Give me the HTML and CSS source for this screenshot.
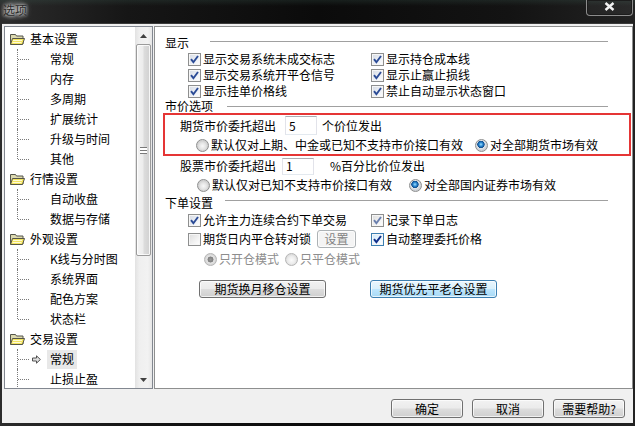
FILE: index.html
```html
<!DOCTYPE html>
<html lang="zh-CN">
<head>
    <meta charset="UTF-8">
    <title>选项</title>
    <link rel="stylesheet" href="styles.css">
</head>
<body>
<div class="window">
    <div class="window__title">
        <span class="window__caption">选项</span>
        <div class="window__close">
            <svg width="11" height="9" viewBox="0 0 11 9"><path d="M1.5 1l8 7M9.5 1l-8 7" stroke="#f2f2f2" stroke-width="2.4"/></svg>
        </div>
    </div>

    <div class="window__client">
        <div class="options">
            <div class="tree">
                <ul class="tree__list">
                    <li class="tree__group"><svg class="tree__folder" viewBox="0 0 15 12"><path d="M0.5 1.5h5l1 1.5h6.5v8H0.5z" fill="#dcd9b0" stroke="#55554a"/><path d="M2.5 5.5h12l-2 6H0.5z" fill="#f3e45e" stroke="#55554a"/><path d="M3 7.5h9M2.5 9.5h9" stroke="#fffbd8"/></svg>基本设置</li>
                    <li class="tree__item">常规</li>
                    <li class="tree__item">内存</li>
                    <li class="tree__item">多周期</li>
                    <li class="tree__item">扩展统计</li>
                    <li class="tree__item">升级与时间</li>
                    <li class="tree__item tree__item_last">其他</li>
                    <li class="tree__group"><svg class="tree__folder" viewBox="0 0 15 12"><path d="M0.5 1.5h5l1 1.5h6.5v8H0.5z" fill="#dcd9b0" stroke="#55554a"/><path d="M2.5 5.5h12l-2 6H0.5z" fill="#f3e45e" stroke="#55554a"/><path d="M3 7.5h9M2.5 9.5h9" stroke="#fffbd8"/></svg>行情设置</li>
                    <li class="tree__item">自动收盘</li>
                    <li class="tree__item tree__item_last">数据与存储</li>
                    <li class="tree__group"><svg class="tree__folder" viewBox="0 0 15 12"><path d="M0.5 1.5h5l1 1.5h6.5v8H0.5z" fill="#dcd9b0" stroke="#55554a"/><path d="M2.5 5.5h12l-2 6H0.5z" fill="#f3e45e" stroke="#55554a"/><path d="M3 7.5h9M2.5 9.5h9" stroke="#fffbd8"/></svg>外观设置</li>
                    <li class="tree__item">K线与分时图</li>
                    <li class="tree__item">系统界面</li>
                    <li class="tree__item">配色方案</li>
                    <li class="tree__item tree__item_last">状态栏</li>
                    <li class="tree__group"><svg class="tree__folder" viewBox="0 0 15 12"><path d="M0.5 1.5h5l1 1.5h6.5v8H0.5z" fill="#dcd9b0" stroke="#55554a"/><path d="M2.5 5.5h12l-2 6H0.5z" fill="#f3e45e" stroke="#55554a"/><path d="M3 7.5h9M2.5 9.5h9" stroke="#fffbd8"/></svg>交易设置</li>
                    <li class="tree__item tree__item_current">
                        <svg class="tree__arrow" viewBox="0 0 9 9"><path d="M0.5 3h4V0.8L8.4 4.5 4.5 8.2V6h-4z" fill="#dedede" stroke="#505050"/></svg>
                        <span class="tree__label">常规</span>
                    </li>
                    <li class="tree__item">止损止盈</li>
                </ul>
                <div class="scroll">
                    <div class="scroll__btn"><svg width="7" height="4" viewBox="0 0 7 4"><path d="M0 4h7L3.5 0z" fill="#404040"/></svg></div>
                    <div class="scroll__track">
                        <div class="scroll__thumb"><span class="scroll__grip"></span></div>
                    </div>
                    <div class="scroll__btn"><svg width="7" height="4" viewBox="0 0 7 4"><path d="M0 0h7L3.5 4z" fill="#404040"/></svg></div>
                </div>
            </div>

            <div class="panel">
                <div class="group group_show">
                    <span class="group__title">显示</span>
                    <span class="group__line"></span>
                </div>
                <div class="checks">
                    <label class="check"><span class="check__box check__box_on"></span>显示交易系统未成交标志</label>
                    <label class="check"><span class="check__box check__box_on"></span>显示持仓成本线</label>
                    <label class="check"><span class="check__box check__box_on"></span>显示交易系统开平仓信号</label>
                    <label class="check"><span class="check__box check__box_on"></span>显示止赢止损线</label>
                    <label class="check"><span class="check__box check__box_on"></span>显示挂单价格线</label>
                    <label class="check"><span class="check__box check__box_on"></span>禁止自动显示状态窗口</label>
                </div>

                <div class="group group_market">
                    <span class="group__title">市价选项</span>
                    <span class="group__line"></span>
                </div>
                <div class="highlight">
                    <div class="price-row price-row_futures">
                        期货市价委托超出<span class="field field_futures">5</span>个价位发出
                    </div>
                    <div class="radio-row radio-row_futures">
                        <label class="radio"><span class="radio__dot"></span>默认仅对上期、中金或已知不支持市价接口有效</label>
                        <label class="radio radio_next"><span class="radio__dot radio__dot_on"></span>对全部期货市场有效</label>
                    </div>
                </div>
                <div class="price-row price-row_stock">
                    股票市价委托超出<span class="field field_stock">1</span>%百分比价位发出
                </div>
                <div class="radio-row radio-row_stock">
                    <label class="radio"><span class="radio__dot"></span>默认仅对已知不支持市价接口有效</label>
                    <label class="radio radio_next"><span class="radio__dot radio__dot_on"></span>对全部国内证券市场有效</label>
                </div>

                <div class="group group_order">
                    <span class="group__title">下单设置</span>
                    <span class="group__line"></span>
                </div>
                <div class="order-row order-row_first">
                    <div class="order-row__cell"><label class="check"><span class="check__box check__box_on"></span>允许主力连续合约下单交易</label></div>
                    <label class="check"><span class="check__box check__box_on check__box_faint"></span>记录下单日志</label>
                </div>
                <div class="order-row order-row_second">
                    <div class="order-row__cell">
                        <label class="check"><span class="check__box"></span>期货日内平仓转对锁</label>
                        <span class="btn btn_small btn_disabled">设置</span>
                    </div>
                    <label class="check"><span class="check__box check__box_on check__box_bright"></span>自动整理委托价格</label>
                </div>
                <div class="radio-row radio-row_mode">
                    <label class="radio radio_disabled"><span class="radio__dot radio__dot_gray"></span>只开仓模式</label>
                    <label class="radio radio_disabled radio_mode"><span class="radio__dot radio__dot_off"></span>只平仓模式</label>
                </div>
                <div class="panel__actions">
                    <span class="btn btn_wide">期货换月移仓设置</span>
                    <span class="btn btn_wide btn_default">期货优先平老仓设置</span>
                </div>
            </div>
        </div>

        <div class="footer">
            <span class="btn">确定</span>
            <span class="btn">取消</span>
            <span class="btn">需要帮助?</span>
        </div>
    </div>
</div>
</body>
</html>
```

FILE: styles.css
```css
*{box-sizing:border-box;margin:0;padding:0}
body{width:635px;height:426px;overflow:hidden;background:#0c0c0c;font:12px/14px "Noto Sans CJK SC","Microsoft YaHei",sans-serif;color:#000}

.window{display:flex;flex-direction:column;width:635px;height:426px;background:linear-gradient(90deg,#2c2c2c 0,#161616 20%,#0b0b0b 50%,#131313 80%,#222 100%)}
.window__title{display:flex;justify-content:space-between;align-items:flex-start;height:23px;padding-left:3px;background:linear-gradient(180deg,rgba(60,90,80,.25) 0,rgba(0,0,0,0) 6px)}
.window__caption{padding:0 2px;margin-left:-2px;line-height:20px;color:#2a2a2a;border-radius:6px;background:radial-gradient(ellipse at center,rgba(190,190,190,.55) 0,rgba(120,120,120,.25) 55%,rgba(0,0,0,0) 80%);text-shadow:0 0 3px rgba(255,255,255,.9),0 0 6px rgba(255,255,255,.6)}
.window__close{display:flex;justify-content:center;align-items:flex-start;width:47px;height:16px;margin-right:2px;padding-top:2px;border:1px solid #8c8c8c;border-top:none;border-radius:0 0 4px 4px;box-shadow:inset 0 0 0 1px #1c1c1c;background:rgba(255,255,255,.04)}

.window__client{display:flex;flex-direction:column;flex:1;margin:0 2px 3px;padding:2px 0 0 2px;background:#f0f0f0;border-top:1px solid #3a3a3a}

.options{display:flex;gap:1px;height:363px}

/* дерево разделов */
.tree{display:flex;width:149px;border:1px solid #828790;background:#fff}
.tree__list{flex:1;list-style:none;padding-top:2px;overflow:hidden}
.tree__group{display:flex;align-items:center;height:20px;padding-left:5px;white-space:nowrap}
.tree__folder{width:15px;height:12px;margin-right:5px}
.tree__item{position:relative;display:flex;align-items:center;height:20px;padding-left:45px;white-space:nowrap}
.tree__item:before{content:'';position:absolute;left:12px;top:0;bottom:0;border-left:1px dotted #7a7a7a}
.tree__item:after{content:'';position:absolute;left:13px;top:10px;width:11px;border-top:1px dotted #7a7a7a}
.tree__item_last:before{bottom:10px}
.tree__item_current{padding-left:27px}
.tree__arrow{width:9px;height:9px;margin-right:6px}
.tree__label{display:flex;align-items:center;height:19px;padding:0 3px;background:#e8e8e8}

.scroll{display:flex;flex-direction:column;width:17px;background:linear-gradient(90deg,#e2e2e2 0,#efefef 25%,#f2f2f2 75%,#e6e6e6 100%)}
.scroll__btn{display:flex;justify-content:center;align-items:center;height:17px}
.scroll__track{flex:1}
.scroll__thumb{display:flex;justify-content:center;align-items:center;height:212px;margin:0 1px;border:1px solid #9b9b9b;border-radius:2px;background:linear-gradient(90deg,#f4f4f4 0,#ececec 45%,#dcdcdc 55%,#d0d0d0 100%);box-shadow:inset 0 0 0 1px rgba(255,255,255,.8)}
.scroll__grip{width:7px;height:7px;border-top:1px solid #7a7a7a;border-bottom:1px solid #7a7a7a;background:linear-gradient(#fff 0,#fff 2px,#7a7a7a 2px,#7a7a7a 3px,#fff 3px)}

/* правая панель */
.panel{flex:1;display:flex;flex-direction:column;padding-top:8px;border:1px solid #8e8f8f;background:#fff}

.group{display:flex;align-items:center;padding-left:10px;padding-right:24px}
.group__line{flex:1;height:2px;border-top:1px solid #a0a0a0;border-bottom:1px solid #fff}
.group_show{height:16px}
.group_show .group__line{margin-left:21px;margin-top:-3px}
.group_market{height:14px}
.group_market .group__line{margin-left:14px;margin-top:1px}
.group_order{height:17px}
.group_order .group__line{margin-left:12px;margin-top:-3px}

.checks{display:grid;grid-template-columns:183px auto;grid-auto-rows:16px;padding-left:33px}
.check{display:flex;align-items:center;white-space:nowrap}
.check__box{display:inline-block;width:13px;height:13px;margin-right:2px;border:1px solid #8e8f8f;background:linear-gradient(135deg,#dcdcdc 0,#f2f2f2 60%,#fff 100%);box-shadow:inset 0 0 0 1px #f6f6f6}
.check__box_on{background:url("data:image/svg+xml,%3Csvg xmlns='http://www.w3.org/2000/svg' viewBox='0 0 11 11'%3E%3Cpath d='M2 5.2l2.4 3L9 2' fill='none' stroke='%232b4b96' stroke-width='1.9'/%3E%3C/svg%3E") center/11px 11px no-repeat,linear-gradient(135deg,#d6dbe4 0,#eef1f6 60%,#fff 100%)}
.check__box_faint{background:url("data:image/svg+xml,%3Csvg xmlns='http://www.w3.org/2000/svg' viewBox='0 0 11 11'%3E%3Cpath d='M2 5.2l2.4 3L9 2' fill='none' stroke='%236a7fae' stroke-width='1.9'/%3E%3C/svg%3E") center/11px 11px no-repeat,linear-gradient(135deg,#dcdcdc 0,#f2f2f2 60%,#fff 100%)}
.check__box_bright{border-color:#3c7fb1;background:url("data:image/svg+xml,%3Csvg xmlns='http://www.w3.org/2000/svg' viewBox='0 0 11 11'%3E%3Cpath d='M2 5.2l2.4 3L9 2' fill='none' stroke='%23102f8a' stroke-width='2'/%3E%3C/svg%3E") center/11px 11px no-repeat,linear-gradient(135deg,#cde8fb 0,#eef7fe 60%,#fff 100%)}

.highlight{height:43px;margin:0 1px 0 8px;border:2px solid #e53535}

.price-row{display:flex;align-items:center;white-space:nowrap}
.price-row_futures{height:21px;padding-left:15px}
.price-row_stock{height:20px;padding-left:25px}
.field{display:flex;align-items:center;width:32px;padding-left:3px;background:#fff;border:1px solid;border-color:#abadb3 #e2e3ea #e3e9ef #e2e3ea}
.field_futures{height:19px;margin:0 5px 0 9px}
.field_stock{height:17px;margin:0 16px 0 6px}

.radio-row{display:flex;align-items:center;white-space:nowrap}
.radio-row_futures{height:18px;padding-left:31px}
.radio-row_futures .radio_next{margin-left:12px}
.radio-row_stock{height:18px;padding-left:42px}
.radio-row_stock .radio_next{margin-left:17px}
.radio-row_mode{height:20px;padding-left:49px}
.radio_mode{margin-left:6px}
.radio{display:flex;align-items:center}
.radio__dot{width:13px;height:13px;margin-right:2px;border:1px solid #8e8f8f;border-radius:50%;background:radial-gradient(circle at 50% 55%,#f8f8f8 0,#e4e4e4 40%,#cfcfcf 65%,#f2f2f2 100%)}
.radio__dot_on{background:radial-gradient(circle at 45% 40%,#9fe0ff 0,#2a86d0 22%,#0c4a8a 38%,#dfe3e8 44%,#c9cdd2 70%,#f4f4f4 100%)}
.radio__dot_gray{border-color:#b5b5b5;background:radial-gradient(circle at 50% 50%,#9a9a9a 0,#7e7e7e 35%,#e6e6e6 42%,#d4d4d4 70%,#f4f4f4 100%)}
.radio__dot_off{border-color:#b5b5b5;background:radial-gradient(circle at 50% 55%,#fbfbfb 0,#ececec 45%,#dcdcdc 70%,#f6f6f6 100%)}
.radio_disabled{color:#8d8d8d}

.order-row{display:flex;align-items:center;padding-left:33px}
.order-row_first{height:18px}
.order-row_second{height:20px}
.order-row__cell{display:flex;align-items:center;width:183px}

.panel__actions{display:flex;gap:44px;margin-top:11px;padding-left:44px}

/* кнопки */
.btn{display:flex;justify-content:center;align-items:center;width:72px;height:19px;border:1px solid #707070;border-radius:3px;background:linear-gradient(180deg,#f2f2f2 0,#ebebeb 48%,#dddddd 52%,#cfcfcf 100%);box-shadow:inset 0 0 0 1px rgba(255,255,255,.7);white-space:nowrap}
.btn_wide{width:127px;height:18px}
.btn_default{border-color:#3c7fb1;background:linear-gradient(180deg,#eaf6fd 0,#d9f0fc 48%,#bee6fd 52%,#a7d9f5 100%)}
.btn_small{width:39px;height:18px;margin-left:6px}
.btn_disabled{color:#838383;border-color:#adb2b5;background:#f4f4f4}

.footer{display:flex;justify-content:flex-end;gap:9px;padding:10px 8px 0 0}
```
